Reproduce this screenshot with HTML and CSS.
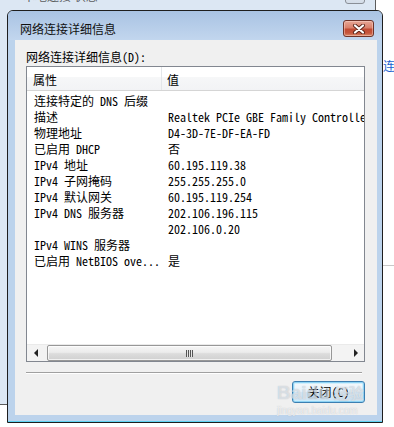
FILE: index.html
```html
<!DOCTYPE html>
<html lang="zh-CN">
<head>
<meta charset="utf-8">
<title>网络连接详细信息</title>
<link rel="stylesheet" href="styles.css">
</head>
<body>
<div class="desk">
  <div class="side-text">连</div>
  <div class="side-line"></div>

  <div class="backwin">
    <div class="back-title"><span class="back-icon"></span>本地连接 状态</div>
    <div class="back-close"></div>
  </div>

  <div class="dialog">
    <div class="titlebar">
      <span class="title">网络连接详细信息</span>
      <button class="close-btn" aria-label="关闭">
        <svg width="14" height="10" viewBox="0 0 14 10">
          <path d="M3 1.5 L11 8.5 M11 1.5 L3 8.5" stroke="#5a2418" stroke-width="4" stroke-linecap="round"/>
          <path d="M3 1.5 L11 8.5 M11 1.5 L3 8.5" stroke="#ffffff" stroke-width="2.2" stroke-linecap="round"/>
        </svg>
      </button>
    </div>
    <div class="client">
      <div class="label">网络连接详细信息(D):</div>
      <div class="listbox">
        <div class="header">
          <div class="hcol hcol1">属性</div>
          <div class="hcol hcol2">值</div>
        </div>
        <div class="rows">
          <div class="row"><span class="c1">连接特定的 DNS 后缀</span><span class="c2"></span></div>
          <div class="row"><span class="c1">描述</span><span class="c2">Realtek PCIe GBE Family Controller</span></div>
          <div class="row"><span class="c1">物理地址</span><span class="c2">D4-3D-7E-DF-EA-FD</span></div>
          <div class="row"><span class="c1">已启用 DHCP</span><span class="c2">否</span></div>
          <div class="row"><span class="c1">IPv4 地址</span><span class="c2">60.195.119.38</span></div>
          <div class="row"><span class="c1">IPv4 子网掩码</span><span class="c2">255.255.255.0</span></div>
          <div class="row"><span class="c1">IPv4 默认网关</span><span class="c2">60.195.119.254</span></div>
          <div class="row"><span class="c1">IPv4 DNS 服务器</span><span class="c2">202.106.196.115</span></div>
          <div class="row"><span class="c1"></span><span class="c2">202.106.0.20</span></div>
          <div class="row"><span class="c1">IPv4 WINS 服务器</span><span class="c2"></span></div>
          <div class="row"><span class="c1">已启用 NetBIOS ove...</span><span class="c2">是</span></div>
        </div>
        <div class="hscroll">
          <div class="sb-btn"><span class="tri-left"></span></div>
          <div class="sb-track">
            <div class="sb-thumb"><span class="grip"></span></div>
          </div>
          <div class="sb-btn"><span class="tri-right"></span></div>
        </div>
      </div>
      <div class="sep"></div>
      <div class="btnrow"><button class="btn">关闭(C)</button></div>
    </div>
  </div>

  <div class="watermark">
    <div class="wm-main"><span class="wm-bai">Bai</span><span class="wm-du">du</span><span class="wm-jy">经验</span></div>
    <div class="wm-url">jingyan.baidu.com</div>
  </div>
</div>
</body>
</html>
```

FILE: styles.css
```css
html, body {
  margin: 0;
  padding: 0;
  background: #ffffff;
}

.desk {
  position: relative;
  width: 394px;
  height: 427px;
  overflow: hidden;
  font-family: "Noto Sans Mono CJK SC", "Noto Sans CJK SC", "Liberation Mono", monospace;
  font-size: 12px;
  color: #000;
}

.side-text {
  position: absolute;
  left: 383px;
  top: 58px;
  font-family: "Noto Sans CJK SC", sans-serif;
  font-size: 12px;
  line-height: 16px;
  color: #1a5fd0;
}

.side-line {
  position: absolute;
  left: 383px;
  top: 265px;
  width: 11px;
  height: 1px;
  background: #c8c8c8;
}

/* window behind */
.backwin {
  position: absolute;
  left: -20px;
  top: -20px;
  width: 396px;
  height: 425px;
  box-sizing: border-box;
  border: 1px solid #5c5c5c;
  background: #dce7f3;
}

.back-title {
  position: absolute;
  left: 36px;
  top: 8px;
  display: flex;
  align-items: center;
  gap: 4px;
  font-family: "Noto Sans CJK SC", sans-serif;
  font-size: 12px;
  line-height: 14px;
  color: #3a3a3a;
  opacity: 0.8;
}

.back-icon {
  width: 6px;
  height: 8px;
  margin-left: -12px;
  margin-right: 8px;
  background: #6d8fb8;
}

.back-close {
  position: absolute;
  left: 364px;
  top: 6px;
  width: 20px;
  height: 17px;
  box-sizing: border-box;
  border: 1px solid #8a8f96;
  border-radius: 3px;
  background: linear-gradient(#e9eef4, #d4dde8);
}

/* dialog */
.dialog {
  position: absolute;
  left: 7px;
  top: 10px;
  width: 376px;
  height: 413px;
  box-sizing: border-box;
  border: 1px solid #1e1e1e;
  border-radius: 6px 6px 0 0;
  background: #bcd3ec;
  box-shadow: inset 0 -1px 0 #5fd2f2;
  display: flex;
  flex-direction: column;
}

.titlebar {
  height: 29px;
  box-sizing: border-box;
  padding: 9px 8px 3px 12px;
  display: flex;
  align-items: center;
  justify-content: space-between;
  border-radius: 5px 5px 0 0;
  background: linear-gradient(#a9c3e3, #c2d6ee);
}

.title {
  font-family: "Noto Sans CJK SC", sans-serif;
  font-size: 12px;
  line-height: 17px;
  color: #111;
}

.close-btn {
  width: 31px;
  height: 17px;
  box-sizing: border-box;
  padding: 0;
  border: 1px solid #6e3328;
  border-radius: 3px;
  background: linear-gradient(#e7a796 0%, #d9806b 45%, #c14b33 55%, #c5553b 80%, #d98a6a 100%);
  box-shadow: inset 0 0 0 1px rgba(255, 220, 210, 0.45);
  display: flex;
  align-items: center;
  justify-content: center;
}

.client {
  margin: 0 5px 7px 7px;
  height: 375px;
  box-sizing: border-box;
  background: #f0f0f0;
  padding: 10px 0 0 11px;
  display: flex;
  flex-direction: column;
}

.label {
  line-height: 14px;
  height: 14px;
}

.listbox {
  margin-top: 2px;
  width: 339px;
  height: 296px;
  box-sizing: border-box;
  border: 1px solid #828790;
  background: #ffffff;
  display: flex;
  flex-direction: column;
}

.header {
  height: 24px;
  box-sizing: border-box;
  border-bottom: 1px solid #d5d5d5;
  background: linear-gradient(#ffffff 0%, #ffffff 45%, #f6f7f8 45%, #f2f3f5 100%);
  display: flex;
}

.hcol {
  padding-top: 3px;
  line-height: 20px;
}

.hcol1 {
  width: 135px;
  box-sizing: border-box;
  padding-left: 6px;
  border-right: 1px solid #e3e6e9;
}

.hcol2 {
  padding-left: 5px;
}

.rows {
  flex: 1;
  padding-top: 2px;
  overflow: hidden;
}

.row {
  height: 16px;
  line-height: 16px;
  display: flex;
  white-space: nowrap;
  overflow: hidden;
}

.c1 {
  width: 135px;
  flex: none;
  box-sizing: border-box;
  padding-left: 7px;
  overflow: hidden;
}

.c2 {
  padding-left: 6px;
}

.hscroll {
  height: 17px;
  display: flex;
  background: #f3f3f3;
  border-top: 1px solid #eaeaea;
  box-sizing: border-box;
}

.sb-btn {
  width: 17px;
  flex: none;
  display: flex;
  align-items: center;
  justify-content: center;
}

.tri-left {
  width: 0;
  height: 0;
  border-top: 4px solid transparent;
  border-bottom: 4px solid transparent;
  border-right: 4px solid #222;
}

.tri-right {
  width: 0;
  height: 0;
  border-top: 4px solid transparent;
  border-bottom: 4px solid transparent;
  border-left: 4px solid #222;
}

.sb-track {
  flex: 1;
  padding: 0 0 0 3px;
  display: flex;
  align-items: stretch;
}

.sb-thumb {
  width: 285px;
  box-sizing: border-box;
  border: 1px solid #979797;
  border-radius: 2px;
  background: linear-gradient(#f5f5f5 0%, #ececec 45%, #dcdcdc 55%, #d0d0d0 100%);
  box-shadow: inset 0 0 0 1px rgba(255, 255, 255, 0.7);
  display: flex;
  align-items: center;
  justify-content: center;
}

.grip {
  width: 7px;
  height: 7px;
  background: repeating-linear-gradient(90deg, #555 0 1px, #e6e6e6 1px 2px);
}

.sep {
  margin-top: 10px;
  width: 336px;
  height: 1px;
  background: #a0a0a0;
  box-shadow: 0 1px 0 #ffffff;
}

.btnrow {
  margin-top: 8px;
  width: 339px;
  display: flex;
  justify-content: flex-end;
}

.btn {
  width: 73px;
  height: 22px;
  box-sizing: border-box;
  margin-right: 0;
  padding: 0;
  border: 1px solid #3c7fb1;
  border-radius: 3px;
  background: linear-gradient(#f4f9fc 0%, #e8f2f9 48%, #d8e9f5 52%, #cfe3f2 100%);
  box-shadow: inset 0 0 0 1px #8ed3f4, inset 0 0 0 2px rgba(200, 236, 252, 0.8);
  font-family: "Noto Sans Mono CJK SC", "Noto Sans CJK SC", monospace;
  font-size: 12px;
  line-height: 20px;
  color: #000;
}

/* watermark overlay */
.watermark {
  position: absolute;
  left: 277px;
  top: 382px;
  width: 90px;
  pointer-events: none;
  font-family: "Liberation Sans", "Noto Sans CJK SC", sans-serif;
}

.wm-main {
  display: flex;
  align-items: baseline;
  font-size: 19px;
  font-weight: bold;
  line-height: 22px;
  color: rgba(255, 255, 255, 0.55);
  text-shadow: 0 0 1px rgba(120, 140, 160, 0.6);
}

.wm-du {
  color: rgba(255, 255, 255, 0.35);
}

.wm-jy {
  margin-left: 4px;
  font-size: 15px;
}

.wm-url {
  font-size: 10px;
  line-height: 12px;
  color: rgba(255, 255, 255, 0.7);
  text-shadow: 0 0 1px rgba(140, 150, 160, 0.6);
}
```
